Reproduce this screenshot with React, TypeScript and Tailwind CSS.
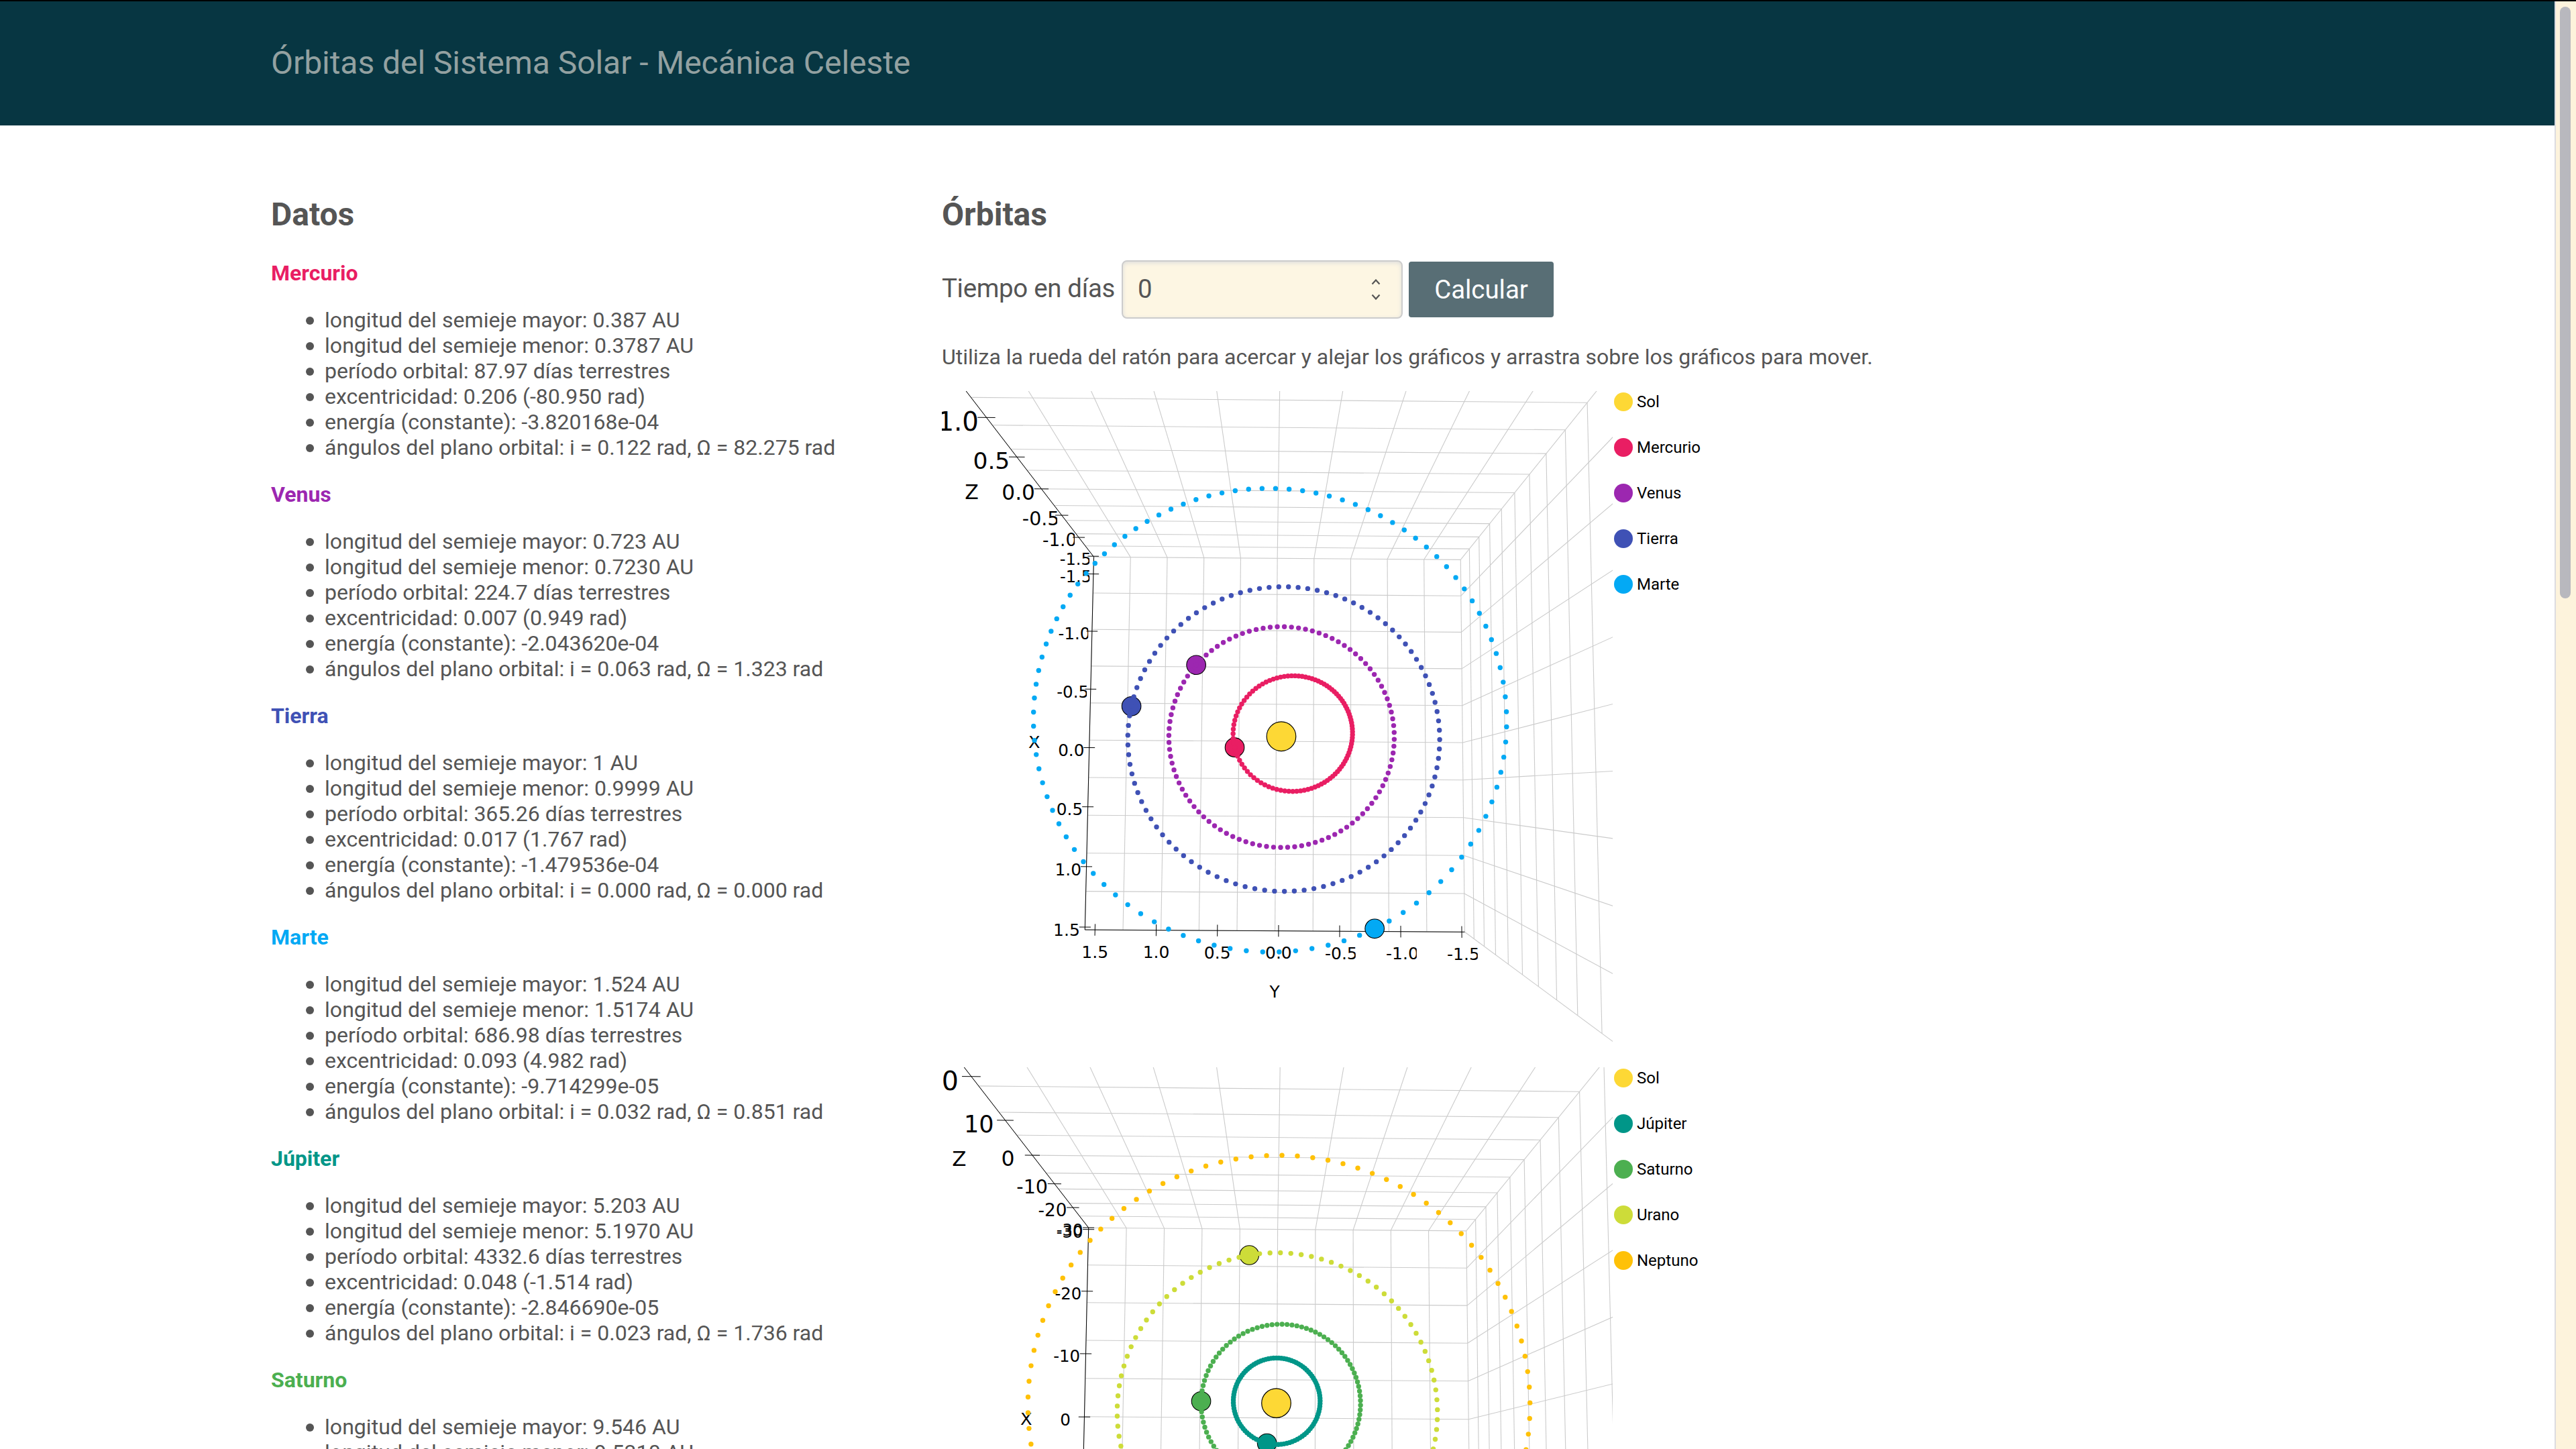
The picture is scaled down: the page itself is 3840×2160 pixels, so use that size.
import React from "react";

type Vec3 = [number, number, number];
type Pt = { x: number; y: number; w: number };

interface Planet {
  name: string;
  color: string;
  a: number;
  e: number;
  i: number;
  node: number;
  peri: number;
}

interface Scene {
  /** floor corners: far left, far right, near right, near left */
  floor: [number, number][];
  zenith: [number, number];
  depth: number;
  xRange: [number, number];
  yRange: [number, number];
  zRange: [number, number];
  ticks: number[];
  zTicks: number[];
  digits: number;
  titles: { text: string; x: number; y: number; size: number }[];
  planets: Planet[];
}

const SUN = "#fdd835";

const DATA = [
  { name: "Mercurio", color: "text-[#e91e63]", rows: ["0.387", "0.3787", "87.97", "0.206 (-80.950 rad)", "-3.820168e-04", "0.122", "82.275"] },
  { name: "Venus", color: "text-[#9c27b0]", rows: ["0.723", "0.7230", "224.7", "0.007 (0.949 rad)", "-2.043620e-04", "0.063", "1.323"] },
  { name: "Tierra", color: "text-[#3f51b5]", rows: ["1", "0.9999", "365.26", "0.017 (1.767 rad)", "-1.479536e-04", "0.000", "0.000"] },
  { name: "Marte", color: "text-[#03a9f4]", rows: ["1.524", "1.5174", "686.98", "0.093 (4.982 rad)", "-9.714299e-05", "0.032", "0.851"] },
  { name: "Júpiter", color: "text-[#009688]", rows: ["5.203", "5.1970", "4332.6", "0.048 (-1.514 rad)", "-2.846690e-05", "0.023", "1.736"] },
  { name: "Saturno", color: "text-[#4caf50]", rows: ["9.546", "9.5310"] },
];

const INNER: Scene = {
  floor: [[226.5, 247.2], [773.3, 251.4], [779.4, 806.3], [213.3, 803]],
  zenith: [495.3, 596.3],
  depth: 0.4502,
  xRange: [-1.65, 1.522],
  yRange: [1.582, -1.524],
  zRange: [-1.52, 1.52],
  ticks: [-1.5, -1, -0.5, 0, 0.5, 1, 1.5],
  zTicks: [-1.5, -1, -0.5, 0, 0.5, 1],
  digits: 1,
  titles: [
    { text: "Z", x: 44.5, y: 161, size: 30 },
    { text: "X", x: 137.7, y: 532.3, size: 25.6 },
    { text: "Y", x: 496.2, y: 903.5, size: 24.8 },
  ],
  planets: [
    { name: "Mercurio", color: "#e91e63", a: 0.387, e: 0.206, i: 0.122, node: 82.275, peri: -80.95 },
    { name: "Venus", color: "#9c27b0", a: 0.723, e: 0.007, i: 0.063, node: 1.323, peri: 0.949 },
    { name: "Tierra", color: "#3f51b5", a: 1, e: 0.017, i: 0, node: 0, peri: 1.767 },
    { name: "Marte", color: "#03a9f4", a: 1.524, e: 0.093, i: 0.032, node: 0.851, peri: 4.982 },
  ],
};

const OUTER: Scene = {
  floor: [[218.7, 239.2], [781.7, 243.9], [788.8, 815.5], [206, 812.3]],
  zenith: [495.3, 596],
  depth: 0.465,
  xRange: [-30.27, 30.19],
  yRange: [29.97, -30.28],
  zRange: [-30.05, 30.05],
  ticks: [-30, -20, -10, 0, 10, 20, 30],
  zTicks: [-30, -20, -10, 0, 10, 20],
  digits: 0,
  titles: [
    { text: "Z", x: 25.8, y: 146.8, size: 31 },
    { text: "X", x: 125.8, y: 532.5, size: 25.6 },
  ],
  planets: [
    { name: "Júpiter", color: "#009688", a: 5.203, e: 0.048, i: 0.023, node: 1.736, peri: -1.514 },
    { name: "Saturno", color: "#4caf50", a: 9.546, e: 0.056, i: 0.043, node: 1.98, peri: -0.39 },
    { name: "Urano", color: "#cddc39", a: 19.19, e: 0.047, i: 0.0135, node: 1.295, peri: 1.662 },
    { name: "Neptuno", color: "#ffc107", a: 30.07, e: 0.009, i: 0.031, node: 2.3, peri: -1.54 },
  ],
};

/** Perspective projection of the unit box: u to the right, v towards the viewer's bottom, h upwards. */
function makeProjector(s: Scene) {
  const [[x0, y0], [x1, y1], [x2, y2], [x3, y3]] = s.floor;
  const dx1 = x1 - x2, dx2 = x3 - x2, sx = x0 - x1 + x2 - x3;
  const dy1 = y1 - y2, dy2 = y3 - y2, sy = y0 - y1 + y2 - y3;
  const den = dx1 * dy2 - dx2 * dy1;
  const g = (sx * dy2 - dx2 * sy) / den;
  const k = (dx1 * sy - sx * dy1) / den;
  return (u: number, v: number, h: number): Pt => {
    const up = -s.depth * h;
    const w = 1 + g * u + k * v + up;
    return {
      x: ((x1 - x0 + g * x1) * u + (x3 - x0 + k * x3) * v + x0 + up * s.zenith[0]) / w,
      y: ((y1 - y0 + g * y1) * u + (y3 - y0 + k * y3) * v + y0 + up * s.zenith[1]) / w,
      w,
    };
  };
}

const norm = (value: number, [from, to]: [number, number]) => (value - from) / (to - from);

/** Heliocentric position after the given mean anomaly. */
function position(p: Planet, mean: number): Vec3 {
  let E = mean;
  for (let n = 0; n < 12; n++) E -= (E - p.e * Math.sin(E) - mean) / (1 - p.e * Math.cos(E));
  const px = p.a * (Math.cos(E) - p.e);
  const py = p.a * Math.sqrt(1 - p.e * p.e) * Math.sin(E);
  const c = Math.cos(p.peri), d = Math.sin(p.peri);
  const qx = px * c - py * d, qy = px * d + py * c;
  const C = Math.cos(p.node), S = Math.sin(p.node);
  const ry = qy * Math.cos(p.i);
  return [qx * C - ry * S, qx * S + ry * C, qy * Math.sin(p.i)];
}

function Label({ text, x, y, size, align }: { text: string; x: number; y: number; size: number; align: "end" | "middle" }) {
  let em = 0;
  for (const ch of text) em += ch === "-" ? 0.361 : ch === "." ? 0.318 : 0.636;
  const decimal = text.includes(".");
  const negative = text.startsWith("-");
  const trimmed = decimal && negative ? em - 0.19 : em;
  const visible = decimal && negative ? em - 0.12 : em;
  const pad = decimal ? 0 : text.length === 1 ? 0.52 : negative ? 0.03 : 0.17;
  const start = align === "end" ? x - (trimmed + pad - 0.04) * size : x - (trimmed * size) / 2;
  return (
    <svg x={start} y={y - size} width={visible * size} height={size * 1.3} overflow="hidden">
      <text x={0} y={size} fontSize={size}>
        {text}
      </text>
    </svg>
  );
}

function Graph({ scene }: { scene: Scene }) {
  const P = makeProjector(scene);
  const at = ([x, y, z]: Vec3) => P(norm(y, scene.yRange), norm(x, scene.xRange), norm(z, scene.zRange));
  const seg = (key: string, a: Pt, b: Pt) => <line key={key} x1={a.x} y1={a.y} x2={b.x} y2={b.y} />;
  const steps = Array.from({ length: 11 }, (_, n) => n / 10);
  const grid: React.ReactNode[] = [];
  steps.forEach((t) => {
    grid.push(seg(`a${t}`, P(t, 0, 0), P(t, 1, 0)));
    grid.push(seg(`b${t}`, P(0, t, 0), P(1, t, 0)));
    if (t > 0) {
      grid.push(seg(`c${t}`, P(0, 0, t), P(1, 0, t)));
      grid.push(seg(`e${t}`, P(1, 0, t), P(1, 1, t)));
    }
    grid.push(seg(`d${t}`, P(t, 0, 0), P(t, 0, 1)));
    if (t > 0) grid.push(seg(`f${t}`, P(1, t, 0), P(1, t, 1)));
  });
  const fmt = (n: number) => n.toFixed(scene.digits);
  const T = 0.0151;
  const FONT = 24.2;
  const axes: React.ReactNode[] = [
    seg("z", P(0, 0, 0), P(0, 0, 1)),
    seg("x", P(0, 0, 0), P(0, 1, 0)),
    seg("y", P(0, 1, 0), P(1, 1, 0)),
  ];
  const labels: React.ReactNode[] = [];
  scene.zTicks.forEach((t) => {
    const h = norm(t, scene.zRange);
    const a = P(-T, 0, h), c = P(0, 0, h);
    axes.push(seg(`tz${t}`, a, P(T, 0, h)));
    labels.push(<Label key={`lz${t}`} text={fmt(t)} x={a.x} y={c.y + (0.51 * FONT) / c.w} size={FONT / c.w} align="end" />);
  });
  scene.ticks.forEach((t) => {
    const v = norm(t, scene.xRange);
    const a = P(-T, v, 0), c = P(0, v, 0);
    axes.push(seg(`tx${t}`, a, P(T, v, 0)));
    labels.push(<Label key={`lx${t}`} text={fmt(t)} x={a.x} y={c.y + (0.51 * FONT) / c.w} size={FONT / c.w} align="end" />);
    const u = norm(t, scene.yRange);
    const m = P(u, 1, 0);
    axes.push(seg(`ty${t}`, P(u, 1 - T, 0), P(u, 1 + T, 0)));
    labels.push(<Label key={`ly${t}`} text={fmt(t)} x={m.x} y={m.y + (1.66 * FONT) / m.w} size={FONT / m.w} align="middle" />);
  });
  const sun = at([0, 0, 0]);
  return (
    <svg width={1000} height={1000} viewBox="0 0 1000 1000" className="block shrink-0 overflow-hidden">
      <g stroke="#cbcbcb" strokeWidth={1.1}>{grid}</g>
      <g stroke="#000" strokeWidth={1}>{axes}</g>
      <g fill="#000" fontFamily='"DejaVu Sans", sans-serif'>
        {labels}
        {scene.titles.map((t) => (
          <text key={t.text} x={t.x} y={t.y} fontSize={t.size} textAnchor="middle">
            {t.text}
          </text>
        ))}
      </g>
      <circle cx={sun.x} cy={sun.y} r={21.8} fill={SUN} stroke="#000" strokeWidth={1.2} />
      {scene.planets.map((p) => {
        const c = at(position(p, 0));
        return <circle key={p.name} cx={c.x} cy={c.y} r={14.3} fill={p.color} stroke="#000" strokeWidth={1.1} />;
      })}
      {scene.planets.map((p) => (
        <g key={p.name} fill={p.color}>
          {Array.from({ length: 100 }, (_, n) => {
            const c = at(position(p, (2 * Math.PI * n) / 100));
            return <circle key={n} cx={c.x} cy={c.y} r={3.7} />;
          })}
        </g>
      ))}
    </svg>
  );
}

function Legend({ planets }: { planets: Planet[] }) {
  return (
    <ul className="ml-[2px] flex flex-col gap-10 pt-[2px] text-2xl leading-7 text-black">
      {[{ name: "Sol", color: SUN }, ...planets].map((p) => (
        <li key={p.name} className="flex h-7 items-center gap-[6px]">
          <span className="size-7 rounded-full" style={{ backgroundColor: p.color }} />
          <span>{p.name}</span>
        </li>
      ))}
    </ul>
  );
}

function Item({ children, wide }: { children: React.ReactNode; wide?: boolean }) {
  return (
    <li className="flex items-center gap-4">
      <span className="mt-px size-3 shrink-0 rounded-full bg-[#555]" />
      <span className={wide ? "tracking-[0.05px]" : ""}>{children}</span>
    </li>
  );
}

export default function App() {
  return (
    <div className="flex h-[2160px] w-[3840px] overflow-hidden border-t-2 border-black bg-white font-[Roboto,sans-serif] text-[32px] leading-[38px] text-[#555]">
      <div className="h-full w-[3808px] overflow-hidden">
        <header className="h-[185px] bg-[#073642] px-[404px] pt-16">
          <h1 className="text-5xl leading-[56px] tracking-[-0.05px] text-[#93a1a1]">
            Órbitas del Sistema Solar - Mecánica Celeste
          </h1>
        </header>
        <main className="flex pt-[105px] pl-[404px]">
          <section className="w-[1000px] shrink-0">
            <h2 className="mb-10 text-5xl leading-[56px] font-bold">Datos</h2>
            {DATA.map(({ name, color, rows }) => (
              <div key={name} className="mb-8">
                <h4 className={`mb-8 font-bold ${color}`}>{name}</h4>
                <ul className="pl-[52px]">
                  <Item wide>longitud del semieje mayor: {rows[0]} AU</Item>
                  <Item wide>longitud del semieje menor: {rows[1]} AU</Item>
                  {rows.length > 2 && (
                    <>
                      <Item>período orbital: {rows[2]} días terrestres</Item>
                      <Item>excentricidad: {rows[3]}</Item>
                      <Item>energía (constante): {rows[4]}</Item>
                      <Item>
                        ángulos del plano orbital: i = {rows[5]} rad, Ω = {rows[6]} rad
                      </Item>
                    </>
                  )}
                </ul>
              </div>
            ))}
          </section>
          <section className="shrink-0">
            <h2 className="text-5xl leading-[56px] font-bold">Órbitas</h2>
            <form className="mt-10 flex h-[87px] items-center text-[38.4px] leading-[46px]">
              <label className="mb-1 w-[268px] tracking-[-0.3px]">Tiempo en días</label>
              <div className="flex h-[87px] w-[419px] items-center justify-between rounded-lg border-2 border-[#ccc] bg-[#fdf6e3] pr-[31px] pl-[22px] shadow-[inset_0_2px_6px_#ddd]">
                <span className="mb-px">0</span>
                <svg width={14} height={32} viewBox="0 0 14 32" fill="none" stroke="#555" strokeWidth={2.2}>
                  <path d="M1.5 7.5 L7 1.5 L12.5 7.5" />
                  <path d="M1.5 23.5 L7 29.5 L12.5 23.5" />
                </svg>
              </div>
              <button type="button" className="ml-[9px] h-[83px] w-[216px] rounded bg-[#586e75] text-white">
                Calcular
              </button>
            </form>
            <p className="mt-[38px] mb-8">
              Utiliza la rueda del ratón para acercar y alejar los gráficos y arrastra sobre los gráficos para mover.
            </p>
            <div className="mb-2 flex">
              <Graph scene={INNER} />
              <Legend planets={INNER.planets} />
            </div>
            <div className="flex">
              <Graph scene={OUTER} />
              <Legend planets={OUTER.planets} />
            </div>
          </section>
        </main>
      </div>
      <aside className="h-full w-8 border-l-2 border-[#dcdce0] bg-[#fdf3dc] pt-2 pl-[6px]">
        <div className="h-[882px] w-4 rounded-full bg-[#b8b8be]" />
      </aside>
    </div>
  );
}
